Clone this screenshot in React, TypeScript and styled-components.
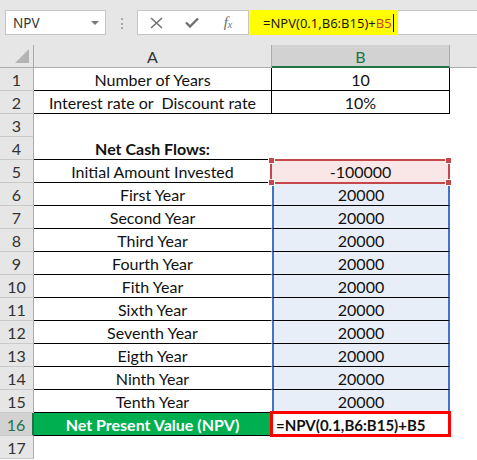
import styled, { createGlobalStyle } from 'styled-components';

const GlobalStyle = createGlobalStyle`
  html, body {
    margin: 0;
    padding: 0;
    background: #ffffff;
  }
  body {
    font-family: Lato, 'Liberation Sans', sans-serif;
  }
`;

type Tint = 'pink' | 'blue' | 'green';

interface SheetRow {
  n: number;
  a?: string;
  b?: string;
  aBold?: boolean;
  aLine?: boolean;
  bLine?: boolean;
  boxed?: boolean;
  tint?: Tint;
}

const YEARS = [
  'First Year',
  'Second Year',
  'Third Year',
  'Fourth Year',
  'Fith Year',
  'Sixth Year',
  'Seventh Year',
  'Eigth Year',
  'Ninth Year',
  'Tenth Year',
];

const ROWS: SheetRow[] = [
  { n: 1, a: 'Number of Years', b: '10', boxed: true },
  { n: 2, a: 'Interest rate or  Discount rate', b: '10%', boxed: true },
  { n: 3 },
  { n: 4, a: 'Net Cash Flows:', aBold: true, aLine: true },
  { n: 5, a: 'Initial Amount Invested', b: '-100000', aLine: true, tint: 'pink' },
  ...YEARS.map((year, i) => ({
    n: 6 + i,
    a: year,
    b: '20000',
    aLine: true,
    bLine: i < YEARS.length - 1,
    tint: 'blue' as Tint,
  })),
  { n: 16, a: 'Net Present Value (NPV)', aBold: true, aLine: true, tint: 'green' },
  { n: 17 },
];

const FILLS: Record<Tint, string> = {
  pink: '#f9e7e7',
  blue: '#e8eef8',
  green: '#00b050',
};

export default function App() {
  return (
    <Page>
      <GlobalStyle />
      <Toolbar>
        <NameBox>
          <span>NPV</span>
          <DropArrow />
        </NameBox>
        <Grip>
          <i />
          <i />
          <i />
        </Grip>
        <FxBox>
          <IconSlot>
            <svg width="13" height="12" viewBox="0 0 13 12">
              <path d="M1 1 L12 11 M12 1 L1 11" stroke="#707070" strokeWidth="1.5" fill="none" />
            </svg>
          </IconSlot>
          <IconSlot>
            <svg width="14" height="11" viewBox="0 0 14 11">
              <path d="M1 5.5 L5 9.5 L13 1.5" stroke="#707070" strokeWidth="2.4" fill="none" />
            </svg>
          </IconSlot>
          <IconSlot>
            <FxLabel>
              f<sub>x</sub>
            </FxLabel>
          </IconSlot>
        </FxBox>
        <FormulaInput>
          <Highlight>
            =NPV(0.1,B6:B15)+<RefText>B5</RefText>
            <Caret />
          </Highlight>
        </FormulaInput>
      </Toolbar>

      <Sheet>
        <Corner>
          <CornerMark />
        </Corner>
        <ColHead>A</ColHead>
        <ColHead $active>B</ColHead>
        <ColHead $last />

        {ROWS.map((row) => (
          <Row key={row.n} row={row} />
        ))}
      </Sheet>
    </Page>
  );
}

function Row({ row }: { row: SheetRow }) {
  const isResult = row.tint === 'green';
  return (
    <>
      <RowHead $active={isResult}>{row.n}</RowHead>
      <Cell
        $bold={row.aBold}
        $bottom={row.aLine || row.boxed}
        $right={row.boxed}
        $fill={isResult ? FILLS.green : undefined}
        $color={isResult ? '#ffffff' : undefined}
      >
        {row.a}
      </Cell>
      {isResult ? (
        <Cell $align="left" $bold $size={15}>
          =NPV(0.1,B6:B15)+B5
          <ResultFrame />
        </Cell>
      ) : (
        <Cell
          $bottom={row.boxed || row.bLine}
          $right={row.boxed}
          $range={row.tint === 'blue'}
          $fill={row.tint ? FILLS[row.tint] : undefined}
        >
          {row.b}
          {row.tint === 'pink' && (
            <Selection>
              <Handle $x="left" $y="top" />
              <Handle $x="right" $y="top" />
              <Handle $x="left" $y="bottom" />
              <Handle $x="right" $y="bottom" />
            </Selection>
          )}
        </Cell>
      )}
      <Cell />
    </>
  );
}

const Page = styled.div`
  width: 477px;
  height: 460px;
  overflow: hidden;
  background: #ffffff;
`;

const Toolbar = styled.div`
  height: 45px;
  box-sizing: border-box;
  display: flex;
  align-items: flex-start;
  padding: 10px 0 0 5px;
  background: #e6e6e6;
`;

const NameBox = styled.div`
  width: 101px;
  height: 25px;
  box-sizing: border-box;

  display: flex;
  align-items: center;
  justify-content: space-between;
  padding: 0 6px 0 7px;

  background: #ffffff;
  border: 1px solid #c6c6c6;
  font-family: 'Noto Sans', 'Open Sans', sans-serif;
  font-size: 13.5px;
  color: #333333;
`;

const DropArrow = styled.span`
  width: 0;
  height: 0;
  border-left: 4px solid transparent;
  border-right: 4px solid transparent;
  border-top: 4px solid #7a7a7a;
`;

const Grip = styled.div`
  width: 31px;
  display: flex;
  flex-direction: column;
  align-items: center;
  gap: 2.5px;
  padding-top: 8px;

  i {
    width: 2px;
    height: 2px;
    background: #a8a8a8;
  }
`;

const FxBox = styled.div`
  width: 112px;
  height: 25px;
  box-sizing: border-box;
  display: flex;
  align-items: center;
  margin-right: 1px;
  background: #ffffff;
  border: 1px solid #c6c6c6;
`;

const IconSlot = styled.div`
  width: 36px;
  display: flex;
  justify-content: center;
  align-items: center;
`;

const FxLabel = styled.span`
  font-family: 'Liberation Serif', serif;
  font-style: italic;
  font-size: 15px;
  color: #6e6e6e;

  sub {
    font-size: 10px;
    vertical-align: -1px;
  }
`;

const FormulaInput = styled.div`
  flex: 1;
  height: 25px;
  box-sizing: border-box;
  display: flex;
  background: #ffffff;
  border-top: 1px solid #c6c6c6;
  border-bottom: 1px solid #c6c6c6;
`;

const Highlight = styled.div`
  width: 148px;
  box-sizing: border-box;
  display: flex;
  align-items: center;
  padding-left: 13px;
  margin: -1px 0;

  background: #ffff00;
  font-family: 'Noto Sans', 'Open Sans', sans-serif;
  font-size: 13px;
  color: #1a1a1a;
  white-space: pre;
`;

const RefText = styled.span`
  color: #c9452a;
`;

const Caret = styled.span`
  width: 1px;
  height: 18px;
  margin-left: 1px;
  background: #000000;
`;

const Sheet = styled.div`
  display: grid;
  grid-template-columns: 34px 238px 178px 1fr;
  grid-template-rows: repeat(18, 23px);
  font-size: 16px;
`;

const Corner = styled.div`
  display: flex;
  align-items: flex-end;
  justify-content: flex-end;
  padding: 0 4px 4px 0;
  box-sizing: border-box;
  background: #e6e6e6;
  border-right: 1px solid #ababab;
  border-bottom: 1px solid #ababab;
`;

const CornerMark = styled.span`
  width: 0;
  height: 0;
  border-left: 14px solid transparent;
  border-bottom: 14px solid #b4b4b4;
`;

const ColHead = styled.div<{ $active?: boolean; $last?: boolean }>`
  display: flex;
  align-items: center;
  justify-content: center;
  box-sizing: border-box;
  padding-top: 1px;

  background: ${({ $active }) => ($active ? '#d2d2d2' : '#e6e6e6')};
  border-right: 1px solid ${({ $last }) => ($last ? 'transparent' : '#ababab')};
  border-bottom: ${({ $active }) => ($active ? '2px solid #217346' : '1px solid #ababab')};
  color: ${({ $active }) => ($active ? '#217346' : '#333333')};
`;

const RowHead = styled.div<{ $active?: boolean }>`
  display: flex;
  align-items: center;
  justify-content: center;
  box-sizing: border-box;

  background: ${({ $active }) => ($active ? '#d2d2d2' : '#e6e6e6')};
  border-bottom: 1px solid #c9c9c9;
  border-right: ${({ $active }) => ($active ? '2px solid #217346' : '1px solid #ababab')};
  color: ${({ $active }) => ($active ? '#217346' : '#333333')};
`;

const Cell = styled.div<{
  $align?: 'center' | 'left';
  $bold?: boolean;
  $size?: number;
  $bottom?: boolean;
  $right?: boolean;
  $range?: boolean;
  $fill?: string;
  $color?: string;
}>`
  position: relative;
  display: flex;
  align-items: center;
  justify-content: ${({ $align }) => ($align === 'left' ? 'flex-start' : 'center')};
  box-sizing: border-box;
  padding: 1px 4px 0;

  background: ${({ $fill }) => $fill ?? '#ffffff'};
  border-bottom: 1px solid ${({ $bottom }) => ($bottom ? '#000000' : 'transparent')};
  border-right: ${({ $right, $range }) =>
    $range ? '2px solid #4472c4' : `1px solid ${$right ? '#000000' : 'transparent'}`};
  border-left: ${({ $range }) => ($range ? '2px solid #4472c4' : 'none')};

  font-size: ${({ $size }) => ($size ? `${$size}px` : 'inherit')};
  font-weight: ${({ $bold }) => ($bold ? 700 : 400)};
  color: ${({ $color }) => $color ?? '#111111'};
  white-space: pre;
`;

const Selection = styled.div`
  position: absolute;
  top: -1px;
  left: -2px;
  right: -1px;
  bottom: -2px;
  z-index: 2;
  border: 2px solid #c6474a;
  pointer-events: none;
`;

const Handle = styled.span<{ $x: 'left' | 'right'; $y: 'top' | 'bottom' }>`
  position: absolute;
  ${({ $x }) => $x}: -4px;
  ${({ $y }) => $y}: -4px;
  width: 5px;
  height: 5px;
  background: #c6474a;
  border: 1px solid #ffffff;
`;

const ResultFrame = styled.div`
  position: absolute;
  inset: -2px;
  z-index: 2;
  border: 3px solid #ff0000;
  pointer-events: none;
`;
